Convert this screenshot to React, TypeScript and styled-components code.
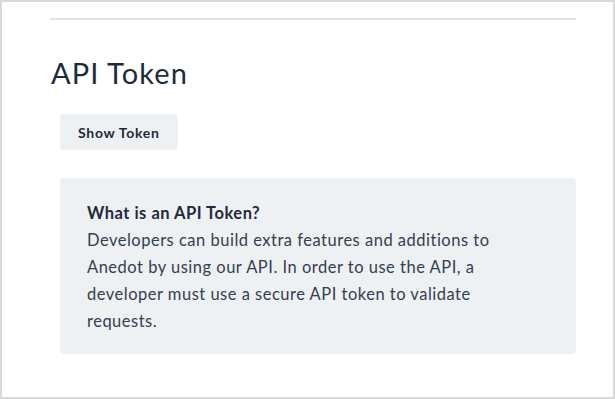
import React from 'react';
import styled, { createGlobalStyle } from 'styled-components';

const GlobalStyle = createGlobalStyle`
  html, body {
    margin: 0;
    padding: 0;
    background: #ffffff;
  }
  body {
    font-family: 'Lato', 'Noto Sans', sans-serif;
    color: #1e2b3a;
  }
`;

const Frame = styled.div`
  box-sizing: border-box;
  width: 615px;
  height: 399px;
  border: 2px solid #d9d9d9;
  padding: 16px 37px 0 48px;
  background: #fff;
`;

const Divider = styled.hr`
  margin: 0;
  border: none;
  height: 2px;
  background: #e1e5e9;
`;

const Title = styled.h2`
  margin: 36px 0 0 1px;
  font-size: 29px;
  font-weight: 400;
  line-height: 34px;
  color: #1e2b3a;
  letter-spacing: 1.1px;
`;

const Section = styled.div`
  margin-left: 10px;
`;

const TokenButton = styled.button`
  margin-top: 24px;
  height: 36px;
  padding: 0 18px;
  border: none;
  border-radius: 4px;
  background: #eef1f4;
  font-family: inherit;
  font-size: 14px;
  font-weight: 700;
  letter-spacing: 0.7px;
  color: #1e2b3a;
  cursor: pointer;
`;

const InfoBox = styled.div`
  margin-top: 28px;
  padding: 22px 27px 19px;
  border-radius: 4px;
  background: #eef1f4;
  font-size: 16.5px;
  letter-spacing: 0.5px;
  line-height: 27px;
  color: #34404e;
`;

const InfoHeading = styled.div`
  font-weight: 700;
  color: #1e2b3a;
`;

const InfoText = styled.p`
  margin: 0;
  max-width: 425px;
`;

export default function App() {
  return (
    <>
      <GlobalStyle />
      <Frame>
        <Divider />
        <Title>API Token</Title>
        <Section>
          <TokenButton>Show Token</TokenButton>
          <InfoBox>
            <InfoHeading>What is an API Token?</InfoHeading>
            <InfoText>
              Developers can build extra features and additions to Anedot by using our API. In order to use
              the API, a developer must use a secure API token to validate requests.
            </InfoText>
          </InfoBox>
        </Section>
      </Frame>
    </>
  );
}
